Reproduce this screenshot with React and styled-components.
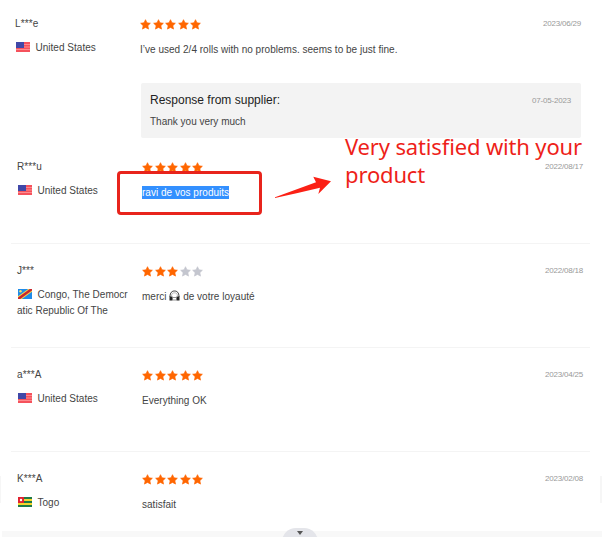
import React from 'react';
import styled, { createGlobalStyle } from 'styled-components';

const GlobalStyle = createGlobalStyle`
  * {
    box-sizing: border-box;
  }
  body {
    margin: 0;
    background: #fff;
    overflow: hidden;
  }
`;

const Page = styled.main`
  position: relative;
  display: flex;
  flex-direction: column;
  width: 602px;
  height: 537px;
  overflow: hidden;
  font-family: 'Liberation Sans', Arial, sans-serif;
  font-size: 10px;
  line-height: 16px;
  color: #444;
`;

const ReviewList = styled.div`
  display: flex;
  flex-direction: column;
  height: 531px;
  padding: 0 12px 0 11px;
`;

const Review = styled.article`
  display: grid;
  grid-template-columns: 125px 1fr;
  flex: none;
  height: ${({ $first, $last }) => ($first ? 140 : $last ? 79 : 104)}px;
  padding: ${({ $first }) => ($first ? '15px 9px 0 4px' : '18px 7px 0 6px')};
  border-bottom: ${({ $first, $last }) => ($first || $last ? 'none' : '1px solid #f4f4f4')};
`;

const Author = styled.div`
  display: flex;
  flex-direction: column;
  gap: 8px;
  padding-top: 1px;
`;

const Name = styled.div`
  height: 16px;
  letter-spacing: 0.1px;
`;

const Country = styled.div`
  width: 114px;
  letter-spacing: 0.02px;
  word-break: break-all;
  svg {
    width: 14px;
    height: 10px;
    margin: 0 5.5px 0 1px;
    vertical-align: -1px;
  }
`;

const Body = styled.div`
  min-width: 0;
`;

const Meta = styled.div`
  display: flex;
  justify-content: space-between;
  height: 18px;
`;

const Stars = styled.div`
  display: flex;
  gap: 1.5px;
  padding-top: 4px;
  svg {
    width: 11px;
    height: 11px;
  }
`;

const PostDate = styled.time`
  padding-top: 1px;
  font-size: 8px;
  letter-spacing: -0.2px;
  color: #999;
`;

const Comment = styled.p`
  margin: 9px 0 0;
  height: 16px;
  white-space: nowrap;
  letter-spacing: 0.02px;
  svg {
    width: 11px;
    height: 11px;
    vertical-align: -1px;
  }
`;

const Selected = styled.span`
  display: inline-block;
  height: 13px;
  line-height: 13px;
  color: #fff;
  background: #3390ff;
`;

const Response = styled.section`
  margin: 25px 0 0 1px;
  height: 55px;
  padding: 9px 10px 9px 9px;
  background: #f3f3f3;
  border-radius: 2px;
`;

const ResponseHead = styled.header`
  display: flex;
  justify-content: space-between;
`;

const ResponseTitle = styled.h3`
  margin: 0;
  font-size: 12px;
  font-weight: 400;
  color: #222;
`;

const ResponseText = styled.p`
  margin: 5px 0 0;
`;

const BottomBar = styled.footer`
  position: relative;
  height: 6px;
  margin-left: 2px;
  background: #f8f8f8;
`;

const Handle = styled.div`
  position: absolute;
  left: 280px;
  top: -3px;
  display: flex;
  justify-content: center;
  width: 36px;
  height: 20px;
  padding-top: 3px;
  border-radius: 14px 14px 0 0;
  background: #e4e5ea;
  svg {
    width: 6px;
    height: 4px;
  }
`;

const EdgeTab = styled.div`
  position: absolute;
  top: 476px;
  ${({ $side }) => $side}: 0;
  width: ${({ $side }) => ($side === 'left' ? 1 : 2)}px;
  height: 27px;
  background: #f6f6f6;
`;

const Frame = styled.div`
  position: absolute;
  left: 117px;
  top: 171px;
  width: 145px;
  height: 44px;
  border: 3px solid #e8241c;
  border-radius: 4px;
`;

const Arrow = styled.svg`
  position: absolute;
  left: 274px;
  top: 175px;
`;

const Note = styled.div`
  position: absolute;
  left: 345px;
  top: 132px;
  width: 250px;
  font-family: 'Noto Sans', sans-serif;
  font-size: 22px;
  letter-spacing: -0.15px;
  line-height: 28px;
  color: #ee1f1a;
`;

const Star = ({ on }) => (
  <svg viewBox="0 0 24 24">
    <path
      d="M12 1.5l3.2 6.9 7.4.9-5.5 5.2 1.5 7.5-6.6-3.7L5.4 22l1.5-7.5L1.4 9.3l7.4-.9z"
      fill={on ? '#ff6600' : '#c4c6cf'}
      stroke={on ? '#ff6600' : '#c4c6cf'}
      strokeWidth="1.5"
      strokeLinejoin="round"
    />
  </svg>
);

const FlagUS = () => (
  <svg viewBox="0 0 14 10">
    <rect width="14" height="10" fill="#f5525c" />
    <path d="M0 2.5h14M0 5h14M0 7.5h14" stroke="#ff9a9c" strokeWidth="0.8" />
    <rect width="8" height="6" fill="#4048a8" />
  </svg>
);

const FlagCongo = () => (
  <svg viewBox="0 0 14 10">
    <rect width="14" height="10" fill="#1f8be8" />
    <path d="M0 10L14 0" stroke="#f5d94a" strokeWidth="4.4" />
    <path d="M0 10L14 0" stroke="#c8262c" strokeWidth="2.6" />
    <circle cx="2.5" cy="2.2" r="1.2" fill="#f5e36a" />
  </svg>
);

const FlagTogo = () => (
  <svg viewBox="0 0 14 10">
    <rect width="14" height="10" fill="#1f7a48" />
    <path d="M0 3h14M0 7h14" stroke="#f5d62c" strokeWidth="2" />
    <rect width="6" height="6" fill="#e0222f" />
    <circle cx="3" cy="3" r="1.2" fill="#fff" />
  </svg>
);

const Headphones = () => (
  <svg viewBox="0 0 11 11">
    <path d="M1 7C1 2.5 3 1 5.5 1S10 2.5 10 7" fill="none" stroke="#333" />
    <path d="M2.5 6C2.7 3.5 4 2.8 5.5 2.8S8.3 3.5 8.5 6" fill="none" stroke="#888" strokeWidth="0.6" />
    <path d="M0.5 6.5h3v4h-3zM7.5 6.5h3v4h-3z" fill="#222" />
    <path d="M3.5 7.5h4v2.5h-4z" fill="none" stroke="#777" strokeWidth="0.8" />
  </svg>
);

const reviews = [
  {
    name: 'L***e',
    country: 'United States',
    Flag: FlagUS,
    stars: 5,
    date: '2023/06/29',
    text: 'I’ve used 2/4 rolls with no problems. seems to be just fine.',
    response: { date: '07-05-2023', text: 'Thank you very much' },
  },
  {
    name: 'R***u',
    country: 'United States',
    Flag: FlagUS,
    stars: 5,
    date: '2022/08/17',
    text: <Selected>ravi de vos produits</Selected>,
  },
  {
    name: 'J***',
    country: 'Congo, The Democratic Republic Of The',
    Flag: FlagCongo,
    stars: 3,
    date: '2022/08/18',
    text: (
      <>
        merci <Headphones /> de votre loyauté
      </>
    ),
  },
  {
    name: 'a***A',
    country: 'United States',
    Flag: FlagUS,
    stars: 5,
    date: '2023/04/25',
    text: 'Everything OK',
  },
  {
    name: 'K***A',
    country: 'Togo',
    Flag: FlagTogo,
    stars: 5,
    date: '2023/02/08',
    text: 'satisfait',
  },
];

const App = () => (
  <>
    <GlobalStyle />
    <Page>
      <ReviewList>
        {reviews.map(({ name, country, Flag, stars, date, text, response }, i) => (
          <Review key={i} $first={i === 0} $last={i === reviews.length - 1}>
            <Author>
              <Name>{name}</Name>
              <Country>
                <Flag />
                {country}
              </Country>
            </Author>
            <Body>
              <Meta>
                <Stars>
                  {[1, 2, 3, 4, 5].map(n => (
                    <Star key={n} on={n <= stars} />
                  ))}
                </Stars>
                <PostDate>{date}</PostDate>
              </Meta>
              <Comment>{text}</Comment>
              {response && (
                <Response>
                  <ResponseHead>
                    <ResponseTitle>Response from supplier:</ResponseTitle>
                    <PostDate>{response.date}</PostDate>
                  </ResponseHead>
                  <ResponseText>{response.text}</ResponseText>
                </Response>
              )}
            </Body>
          </Review>
        ))}
      </ReviewList>
      <BottomBar>
        <Handle>
          <svg viewBox="0 0 6 4">
            <path d="M0 0h6L3 4z" fill="#555" />
          </svg>
        </Handle>
      </BottomBar>
      <EdgeTab $side="left" />
      <EdgeTab $side="right" />
      <Frame />
      <Arrow width="60" height="26" viewBox="0 0 60 26">
        <path d="M1 22.3L42 7.3 39.3 1.7 57 6.3 44.3 19 46 12.7Q24 18 1 23z" fill="#fb2015" />
      </Arrow>
      <Note>Very satisfied with your product</Note>
    </Page>
  </>
);

export default App;
